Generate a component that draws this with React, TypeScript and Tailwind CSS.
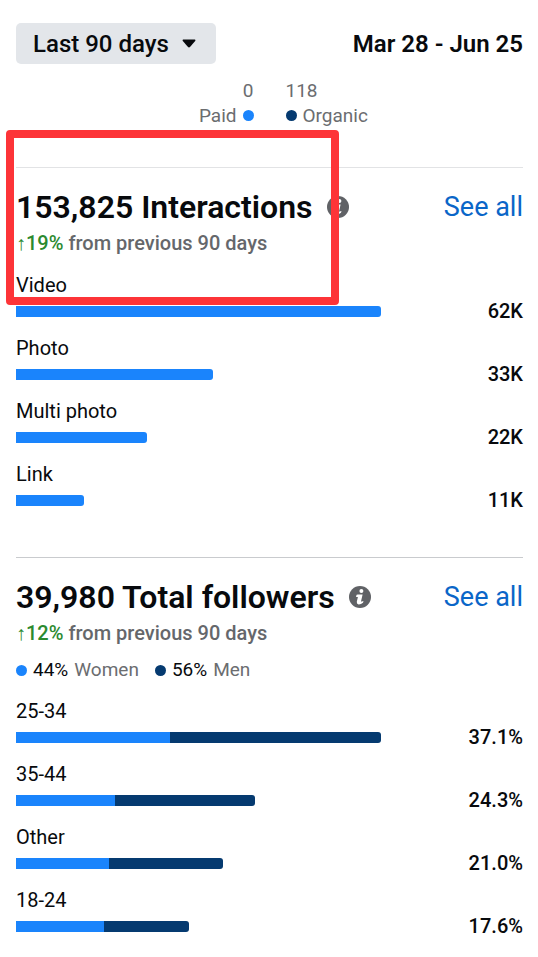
import React from 'react';

interface InteractionRow {
    label: string;
    value: string;
    size: number;
}

interface AudienceRow extends InteractionRow {
    women: number;
}

// size: bar length in % of the longest bar
const interactions: InteractionRow[] = [
    { label: 'Video', value: '62K', size: 100 },
    { label: 'Photo', value: '33K', size: 54 },
    { label: 'Multi photo', value: '22K', size: 36 },
    { label: 'Link', value: '11K', size: 18.7 },
];

// women: share of the bar drawn in the light blue
const audience: AudienceRow[] = [
    { label: '25-34', value: '37.1%', size: 100, women: 42.2 },
    { label: '35-44', value: '24.3%', size: 65.5, women: 41.3 },
    { label: 'Other', value: '21.0%', size: 56.6, women: 45 },
    { label: '18-24', value: '17.6%', size: 47.4, women: 50.9 },
];

const Dot: React.FC<{ dark?: boolean }> = ({ dark }) => (
    <span className={`size-[11px] shrink-0 rounded-full ${dark ? 'bg-[#053a70]' : 'bg-[#1a84fc]'}`} />
);

const InfoIcon: React.FC = () => (
    <svg viewBox="0 0 22 22" className="size-[22px]" aria-hidden="true">
        <circle cx="11" cy="11" r="11" fill="#606266" />
        <circle cx="12.4" cy="5" r="2" fill="#fff" />
        <path
            d="M7.2 9.9 Q7.4 8.5 8.8 8.5 H13.6 L12.1 15 Q12 15.8 12.7 15.6 L14.5 15 L14 16.8 Q11.8 18.5 9.6 18.4 Q7.4 18 7.8 15.8 L8.9 11 L7.1 11.1 Z"
            fill="#fff"
        />
    </svg>
);

interface SectionHeaderProps {
    title: string;
    change: string;
}

const SectionHeader: React.FC<SectionHeaderProps> = ({ title, change }) => (
    <header>
        <div className="flex items-center justify-between h-10">
            <div className="flex items-center gap-[14px]">
                <h2 className="text-[32px] leading-10 font-semibold">{title}</h2>
                <button type="button" aria-label={`About ${title}`}>
                    <InfoIcon />
                </button>
            </div>
            <a href="#" className="text-[27px] leading-10 text-[#0a66c8]">See all</a>
        </div>
        <p className="text-[20px] leading-8 font-medium text-[#65676b]">
            <span className="text-[#2b8a2f]"><span className="font-normal">↑</span>{change}</span> from previous 90 days
        </p>
    </header>
);

const BarRow: React.FC<{ row: InteractionRow; women?: number }> = ({ row, women = 100 }) => (
    <li>
        <div className="text-[20px] leading-[26px]">{row.label}</div>
        <div className="flex items-center justify-between">
            <div className="w-[72%]">
                <div
                    className="flex h-[11px] rounded-r-[3px] overflow-hidden bg-[#053a70]"
                    style={{ width: `${row.size}%` }}
                >
                    <div className="bg-[#1a84fc]" style={{ width: `${women}%` }} />
                </div>
            </div>
            <span className="text-[20px] leading-[26px] font-medium">{row.value}</span>
        </div>
    </li>
);

export default function App() {
    return (
        <main className="min-h-screen bg-white pl-4 pr-[15px] pt-[23px] pb-4 text-[#080a0d] font-[Roboto,sans-serif]">
            <div className="flex items-center justify-between">
                <button
                    type="button"
                    className="flex items-center gap-[13px] h-[41px] pl-[17px] pr-5 rounded-[5px] bg-[#e3e6ea] text-[24px] font-medium"
                >
                    Last 90 days
                    <svg viewBox="0 0 14 9" className="w-[14px] h-[9px]" aria-hidden="true">
                        <path d="M1.2 0.5 H12.8 Q14 0.8 13.2 2 L8.2 7.8 Q7 9 5.8 7.8 L0.8 2 Q0 0.8 1.2 0.5 Z" fill="#080a0d" />
                    </svg>
                </button>
                <span className="text-[24px] font-semibold">Mar 28 - Jun 25</span>
            </div>

            <div className="grid grid-cols-2 gap-8 mt-[14px] text-[19px] leading-[25px] text-[#6b6d70]">
                <div className="flex flex-col items-end">
                    <span>0</span>
                    <span className="flex items-center gap-[6px]">Paid <Dot /></span>
                </div>
                <div className="flex flex-col items-start">
                    <span>118</span>
                    <span className="flex items-center gap-[6px]"><Dot dark /> Organic</span>
                </div>
            </div>

            <section className="relative mt-[39px] pt-[19px] border-t border-[#e2e3e5]">
                <SectionHeader title="153,825 Interactions" change="19%" />
                <ul className="flex flex-col gap-[11px] mt-[13px]">
                    {interactions.map((row) => (
                        <BarRow key={row.label} row={row} />
                    ))}
                </ul>
                {/* Highlight marker over the headline number */}
                <div className="absolute -top-[38px] -left-[10px] w-[333px] h-[175px] border-8 border-[#fd3438] rounded-[4px] pointer-events-none" />
            </section>

            <section className="mt-11 pt-[19px] border-t border-[#c9cbce]">
                <SectionHeader title="39,980 Total followers" change="12%" />
                <div className="flex gap-4 mt-[7px] text-[19px] leading-7">
                    <span className="flex items-center gap-[6px]">
                        <Dot /> 44% <span className="text-[#6b6d70]">Women</span>
                    </span>
                    <span className="flex items-center gap-[6px]">
                        <Dot dark /> 56% <span className="text-[#6b6d70]">Men</span>
                    </span>
                </div>
                <ul className="flex flex-col gap-[11px] mt-[14px]">
                    {audience.map((row) => (
                        <BarRow key={row.label} row={row} women={row.women} />
                    ))}
                </ul>
            </section>
        </main>
    );
}
